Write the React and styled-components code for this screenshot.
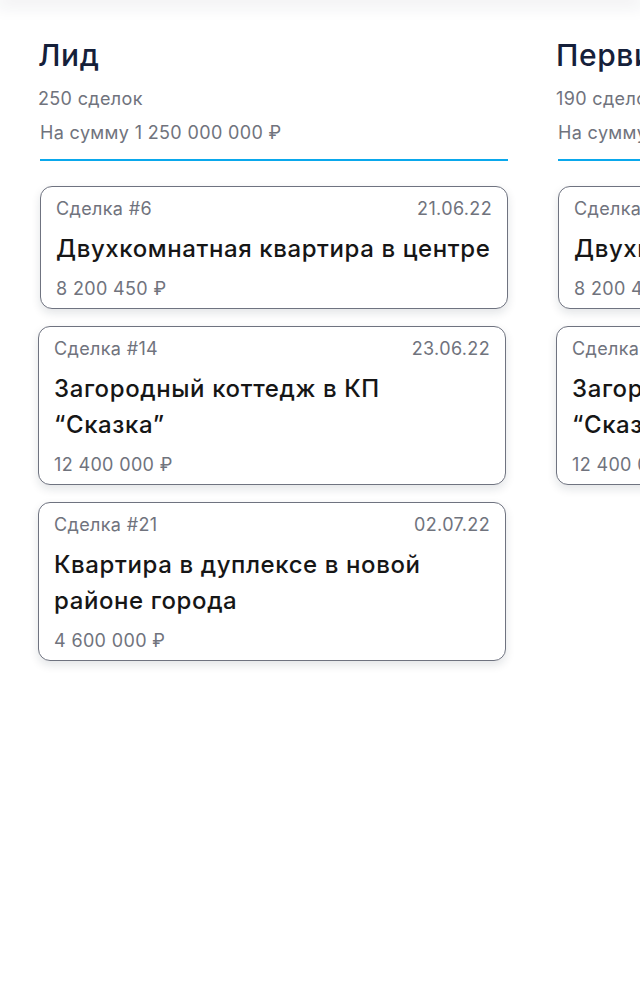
import React from "react";
import styled, { createGlobalStyle } from "styled-components";

const Global = createGlobalStyle`
  html, body { margin: 0; padding: 0; background: #ffffff; }
  body { font-family: Inter, "Noto Sans", sans-serif; overflow: hidden; }
  * { box-sizing: border-box; }
`;

const Page = styled.div`
  width: 640px;
  height: 992px;
  overflow: hidden;
  position: relative;
  background: #fff;
`;

const TopBar = styled.div`
  height: 0;
  width: 100%;
  box-shadow: 0 0 18px 4px rgba(30, 40, 60, 0.13);
`;

const Board = styled.div`
  display: flex;
  gap: 48px;
  padding: 37px 0 0 38px;
  width: max-content;
`;

const Column = styled.section`
  width: 470px;
  display: flex;
  flex-direction: column;
`;

const Title = styled.h2`
  margin: 0;
  font-size: 30px;
  line-height: 36px;
  font-weight: 500;
  letter-spacing: 0.6px;
  color: #15203a;
`;

const Muted = styled.div`
  font-size: 18px;
  line-height: 26px;
  font-weight: 400;
  letter-spacing: 0.35px;
  color: #70737d;
`;

const Count = styled(Muted)`
  margin-top: 13px;
`;

const Sum = styled(Muted)`
  margin: 8px 0 0 2px;
  width: 468px;
  padding-bottom: 13px;
  border-bottom: 2px solid #0aa8ec;
`;

const Cards = styled.div`
  margin-top: 25px;
  display: flex;
  flex-direction: column;
  gap: 17px;
`;

const Card = styled.article`
  width: 468px;
  margin-left: ${(p) => (p.$shift ? "2px" : "0")};
  border: 1px solid #6f7380;
  border-radius: 12px;
  background: #fff;
  box-shadow: 0 4px 10px rgba(20, 30, 50, 0.12);
  padding: 9px 15px 6px;
  display: flex;
  flex-direction: column;
  gap: 9px;
`;

const CardHead = styled(Muted)`
  display: flex;
  justify-content: space-between;
`;

const CardTitle = styled.div`
  font-size: 24px;
  line-height: 36px;
  font-weight: 500;
  letter-spacing: 0.6px;
  color: #161616;
`;

const Price = styled(Muted)``;

const columns = [
  {
    title: "Лид",
    count: "250 сделок",
    sum: "На сумму 1 250 000 000 ₽",
  },
  {
    title: "Первичный контакт",
    count: "190 сделок",
    sum: "На сумму 950 000 000 ₽",
  },
];

const deals = [
  { id: 6, date: "21.06.22", title: "Двухкомнатная квартира в центре", price: "8 200 450 ₽" },
  { id: 14, date: "23.06.22", title: "Загородный коттедж в КП “Сказка”", price: "12 400 000 ₽" },
  { id: 21, date: "02.07.22", title: "Квартира в дуплексе в новой районе города", price: "4 600 000 ₽" },
];

export default function App() {
  return (
    <Page>
      <Global />
      <TopBar />
      <Board>
        {columns.map((c, ci) => (
          <Column key={ci}>
            <Title>{c.title}</Title>
            <Count>{c.count}</Count>
            <Sum>{c.sum}</Sum>
            <Cards>
              {(ci === 0 ? deals : deals.slice(0, 2)).map((d, i) => (
                <Card key={d.id} $shift={i === 0}>
                  <CardHead>
                    <span>Сделка #{d.id}</span>
                    <span>{d.date}</span>
                  </CardHead>
                  <CardTitle>{d.title}</CardTitle>
                  <Price>{d.price}</Price>
                </Card>
              ))}
            </Cards>
          </Column>
        ))}
      </Board>
    </Page>
  );
}
